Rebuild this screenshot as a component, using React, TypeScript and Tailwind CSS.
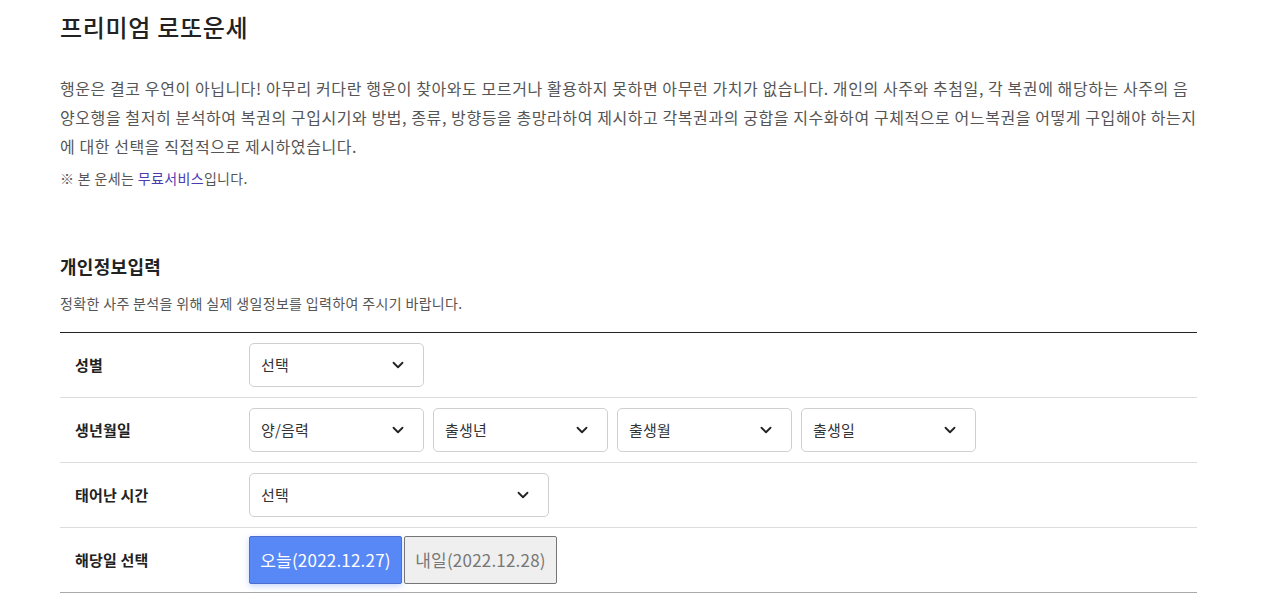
import { ChevronDown } from 'lucide-react'

const font = { fontFamily: '"Noto Sans CJK KR", "Noto Sans", sans-serif' }

type SelectProps = {
  label: string
  width: string
}

const SelectBox = ({ label, width }: SelectProps) => (
  <div
    className={`flex h-[44px] ${width} items-center justify-between rounded-[5px] border border-[#cfcfcf] bg-white pl-[11px] pr-[16px] text-[15px] text-[#333]`}
  >
    <span className="tracking-[0.2px]">{label}</span>
    <ChevronDown size={18} strokeWidth={2.4} className="text-[#222]" />
  </div>
)

const Row = ({ title, children, last }: { title: string; children: React.ReactNode; last?: boolean }) => (
  <div
    className={`flex h-[65px] items-center border-b ${last ? 'border-[#a9a9a9]' : 'border-[#dcdcdc]'}`}
  >
    <div className="w-[189px] pl-[15px] text-[15px] font-bold tracking-[0.2px] text-[#222]">{title}</div>
    <div className="flex items-center gap-[9px]">{children}</div>
  </div>
)

export default function App() {
  return (
    <div className="min-h-screen bg-white" style={font}>
      <div className="ml-[60px] w-[1137px]">
        <h1 className="pt-[11px] text-[24px] font-medium leading-[32px] tracking-[0.7px] text-[#222]">
          프리미엄 로또운세
        </h1>

        <p className="mt-[31px] text-[16px] leading-[29px] tracking-[0.58px] text-[#555]">
          행운은 결코 우연이 아닙니다! 아무리 커다란 행운이 찾아와도 모르거나 활용하지 못하면 아무런 가치가 없습니다.
          개인의 사주와 추첨일, 각 복권에 해당하는 사주의 음양오행을 철저히 분석하여 복권의 구입시기와 방법, 종류,
          방향등을 총망라하여 제시하고 각복권과의 궁합을 지수화하여 구체적으로 어느복권을 어떻게 구입해야 하는지에 대한
          선택을 직접적으로 제시하였습니다.
        </p>
        <p className="mt-[7px] text-[14px] leading-[20px] tracking-[0.35px] text-[#555]">
          ※ 본 운세는 <span className="text-[#4b3bb0]">무료서비스</span>입니다.
        </p>

        <h2 className="mt-[65px] text-[18px] font-bold leading-[26px] tracking-[0.3px] text-[#222]">개인정보입력</h2>
        <p className="mt-[14px] text-[14px] leading-[20px] tracking-[0.35px] text-[#555]">
          정확한 사주 분석을 위해 실제 생일정보를 입력하여 주시기 바랍니다.
        </p>

        <div className="mt-[19px] border-t border-[#222]">
          <Row title="성별">
            <SelectBox label="선택" width="w-[175px]" />
          </Row>
          <Row title="생년월일">
            <SelectBox label="양/음력" width="w-[175px]" />
            <SelectBox label="출생년" width="w-[175px]" />
            <SelectBox label="출생월" width="w-[175px]" />
            <SelectBox label="출생일" width="w-[175px]" />
          </Row>
          <Row title="태어난 시간">
            <SelectBox label="선택" width="w-[300px]" />
          </Row>
          <Row title="해당일 선택" last>
            <div className="flex items-center gap-[2px]">
              <button className="h-[48px] w-[153px] rounded-[2px] border border-[#4a6fd0] bg-[#5887f6] text-[17px] tracking-[0.2px] text-white shadow-[0_2px_6px_rgba(88,135,246,0.35)]">
                오늘(2022.12.27)
              </button>
              <button className="h-[48px] w-[153px] rounded-[2px] border border-[#767676] bg-[#efefef] text-[17px] tracking-[0.2px] text-[#777]">
                내일(2022.12.28)
              </button>
            </div>
          </Row>
        </div>
      </div>
    </div>
  )
}
